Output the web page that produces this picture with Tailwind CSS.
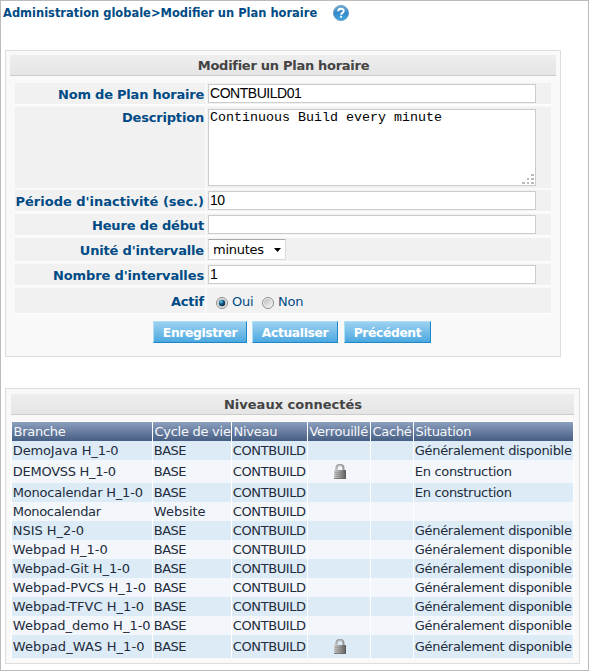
<!DOCTYPE html>
<html lang="fr">
<head>
<meta charset="utf-8">
<title>Modifier un Plan horaire</title>
<script src="https://cdn.jsdelivr.net/npm/@tailwindcss/browser@4"></script>
</head>
<body class="bg-white">
<main class="w-[589px] h-[671px] border border-[#bbb] pl-1 flex flex-col items-start overflow-hidden font-['DejaVu_Sans',sans-serif] text-[13px] whitespace-nowrap text-[#004b85]">
  <div class="h-[49px] pt-[3px] flex items-start">
    <h1 class="-ml-[2px] w-[330px] h-[18px] leading-[19px] font-bold text-[11.47px]">Administration globale&gt;Modifier un Plan horaire</h1>
    <svg class="w-4 h-4 mt-[1px]" viewBox="0 0 16 16">
      <defs><linearGradient id="help" x1="0" y1="0" x2="0" y2="1"><stop offset="0" stop-color="#76afd8"/><stop offset=".5" stop-color="#3387c7"/><stop offset="1" stop-color="#3fa9e4"/></linearGradient></defs>
      <circle cx="8" cy="8" r="7.6" fill="url(#help)" stroke="#6294bd" stroke-width=".8"/>
      <path d="M5.2 6.2C5.3 3 10.8 3 10.8 6.1C10.8 7.8 8.1 7.9 8.1 9.7" fill="none" stroke="#fff" stroke-width="1.9"/>
      <rect x="7.1" y="10.8" width="2" height="1.9" fill="#fff"/>
    </svg>
  </div>

  <section class="w-[556px] h-[307px] border border-[#ddd] bg-[#f9f9f9] p-1">
    <h2 class="h-[21px] leading-[22px] pl-px border-b border-[#ccc] bg-linear-to-b from-[#eee] to-[#e5e5e5] text-center font-bold text-[#444] tracking-[-0.28px]">Modifier un Plan horaire</h2>
    <div class="mt-[7px] ml-[5px] w-[536px] grid grid-cols-[190px_344px] gap-x-[2px] gap-y-[2px] grid-rows-[22px_81px_22px_22px_24px_22px_26px]">
      <label class="bg-[#f1f1f1] border-b border-white text-right pr-px font-bold leading-[23px] tracking-[-0.22px]">Nom de Plan horaire</label>
      <div class="bg-[#f1f1f1] border-b border-white pt-px pl-px"><div class="w-[328px] h-[19px] border border-[#ccc] bg-white pl-px leading-[17px] text-black text-[14px] tracking-[-0.47px] font-['Liberation_Sans',sans-serif]">CONTBUILD01</div></div>
      <label class="bg-[#f1f1f1] text-right pr-px font-bold leading-[22px] tracking-[-0.18px]">Description</label>
      <div class="bg-[#f1f1f1] pt-[2px] pl-px"><div class="w-[328px] h-[77px] border border-[#ccc] bg-white pl-px leading-[15px] text-black text-[13.33px] font-['Liberation_Mono',monospace] flex justify-between">
        <span>Continuous Build every minute</span>
        <svg class="w-3 h-[11px] self-end mb-px mr-px" viewBox="0 0 12 11" fill="#bbb"><path d="M9 1h3v2H9zM5 5h2v2H5zM9 5h3v2H9zM0 9h3v2H0zM5 9h2v2H5zM9 9h3v2H9z"/></svg>
      </div></div>
      <label class="bg-[#f1f1f1] border-b border-white text-right pr-px font-bold leading-[23px] tracking-normal">Période d'inactivité (sec.)</label>
      <div class="bg-[#f1f1f1] border-b border-white pt-px pl-px"><div class="w-[328px] h-[19px] border border-[#ccc] bg-white pl-px leading-[17px] text-black text-[14px] tracking-[-0.47px] font-['Liberation_Sans',sans-serif]">10</div></div>
      <label class="bg-[#f1f1f1] border-b border-white text-right pr-px font-bold leading-[24px] tracking-[-0.16px]">Heure de début</label>
      <div class="bg-[#f1f1f1] border-b border-white pt-px pl-px"><div class="w-[328px] h-[19px] border border-[#ccc] bg-white"></div></div>
      <label class="bg-[#f1f1f1] border-b border-white text-right pr-px font-bold leading-[26px] tracking-[-0.17px]">Unité d'intervalle</label>
      <div class="bg-[#f1f1f1] border-b border-white pt-px pl-px"><div class="w-[78px] h-[21px] rounded-[1px] border border-[#dadada] border-t-[#aaa] bg-white pl-1 pr-1 flex items-center justify-between text-black"><span class="pt-px tracking-[-0.25px]">minutes</span><svg class="w-[7px] h-1" viewBox="0 0 7 4"><path d="M0 0h7L3.5 4z"/></svg></div></div>
      <label class="bg-[#f1f1f1] border-b border-white text-right pr-px font-bold leading-[24px] tracking-[-0.13px]">Nombre d'intervalles</label>
      <div class="bg-[#f1f1f1] border-b border-white pt-px pl-px"><div class="w-[328px] h-[19px] border border-[#ccc] bg-white pl-px leading-[17px] text-black text-[14px] tracking-[-0.47px] font-['Liberation_Sans',sans-serif]">1</div></div>
      <span class="bg-[#f1f1f1] border-b border-white text-right pr-px font-bold leading-[27px] tracking-[-0.2px]">Actif</span>
      <div class="bg-[#f1f1f1] border-b border-white flex leading-[27px] pl-[9px] tracking-[-0.25px]">
        <svg class="w-3 h-3 mt-[9px]" viewBox="0 0 12 12"><defs><radialGradient id="dot" cx=".35" cy=".3" r=".7"><stop offset="0" stop-color="#7ccbee"/><stop offset=".5" stop-color="#155f8c"/><stop offset="1" stop-color="#0a2d47"/></radialGradient></defs><circle cx="6" cy="6" r="5.5" fill="#f4f4f4" stroke="#8a8a8a"/><circle cx="6" cy="6" r="4.2" fill="#ddd" stroke="#c4c4c4" stroke-width=".6"/><circle cx="6" cy="6" r="3.2" fill="url(#dot)"/></svg>
        <span class="w-[34px] pl-1">Oui</span>
        <svg class="w-3 h-3 mt-[9px]" viewBox="0 0 12 12"><defs><linearGradient id="off" x1="0" y1="0" x2="1" y2="1"><stop offset="0" stop-color="#bbb"/><stop offset="1" stop-color="#f6f6f6"/></linearGradient></defs><circle cx="6" cy="6" r="5.5" fill="#f4f4f4" stroke="#8a8a8a"/><circle cx="6" cy="6" r="4" fill="url(#off)"/></svg>
        <span class="pl-1">Non</span>
      </div>
    </div>
    <div class="flex h-[22px] mt-[7px] ml-[143px] text-center font-bold text-white text-[12.3px] leading-[22px] tracking-[-0.36px]">
      <div class="w-[94px] mr-[5px] border border-t-[#aee0f5] border-l-[#aee0f5] border-r-[#1f86c6] border-b-[#1f86c6] bg-linear-to-b from-[#9bd1f0] to-[#4ba9e0]">Enregistrer</div>
      <div class="w-[86px] mr-[6px] border border-t-[#aee0f5] border-l-[#aee0f5] border-r-[#1f86c6] border-b-[#1f86c6] bg-linear-to-b from-[#9bd1f0] to-[#4ba9e0]">Actualiser</div>
      <div class="w-[87px] border border-t-[#aee0f5] border-l-[#aee0f5] border-r-[#1f86c6] border-b-[#1f86c6] bg-linear-to-b from-[#9bd1f0] to-[#4ba9e0]">Précédent</div>
    </div>
  </section>

  <section class="mt-[31px] w-[575px] h-[276px] border border-[#ddd] bg-[#f9f9f9] p-[5px]">
    <h2 class="h-[21px] leading-[22px] pl-px border-b border-[#ccc] bg-linear-to-b from-[#eee] to-[#e5e5e5] text-center font-bold text-[#444]">Niveaux connectés</h2>
    <div id="levels" class="mt-[6px] w-[563px] bg-white p-px flex flex-col gap-px text-[#222c3c]">
      <div class="h-[18px] leading-[19px] grid grid-cols-[140px_78px_75px_62px_42px_159px] gap-px text-[#f5f7fa] tracking-[-0.27px]">
        <div class="pl-[1.5px] bg-linear-to-b from-[#8c9fbe] to-[#475e84]">Branche</div>
        <div class="pl-[1.5px] bg-linear-to-b from-[#8c9fbe] to-[#475e84]">Cycle de vie</div>
        <div class="pl-[1.5px] bg-linear-to-b from-[#8c9fbe] to-[#475e84]">Niveau</div>
        <div class="pl-[1.5px] bg-linear-to-b from-[#8c9fbe] to-[#475e84]">Verrouillé</div>
        <div class="pl-[1.5px] bg-linear-to-b from-[#8c9fbe] to-[#475e84]">Caché</div>
        <div class="pl-[1.5px] bg-linear-to-b from-[#8c9fbe] to-[#475e84]">Situation</div>
      </div>
    </div>
  </section>
</main>
<script>
const G = 'Généralement disponible', E = 'En construction';
const rows = [
  ['DemoJava H_1-0', 'BASE', 0, G, 'tracking-[-0.15px]'],
  ['DEMOVSS H_1-0', 'BASE', 1, E, 'tracking-[-0.27px]'],
  ['Monocalendar H_1-0', 'BASE', 0, E, 'tracking-[-0.2px]'],
  ['Monocalendar', 'Website', 0, '', 'tracking-[-0.33px]'],
  ['NSIS H_2-0', 'BASE', 0, G, 'tracking-[-0.05px]'],
  ['Webpad H_1-0', 'BASE', 0, G, 'tracking-[0.05px]'],
  ['Webpad-Git H_1-0', 'BASE', 0, G, 'tracking-[-0.08px]'],
  ['Webpad-PVCS H_1-0', 'BASE', 0, G, 'tracking-normal'],
  ['Webpad-TFVC H_1-0', 'BASE', 0, G, 'tracking-normal'],
  ['Webpad_demo H_1-0', 'BASE', 0, G, 'tracking-normal'],
  ['Webpad_WAS H_1-0', 'BASE', 1, G, 'tracking-[0.1px]']
];
const lock = `<svg class="w-3 h-[15px] mt-1 ml-[25px]" viewBox="0 0 12 15"><defs><linearGradient id="metal"><stop offset="0" stop-color="#ccc"/><stop offset=".5" stop-color="#999"/><stop offset="1" stop-color="#555"/></linearGradient></defs><path d="M2.5 7V4.2C2.5-.2 9.5-.2 9.5 4.2V7" fill="none" stroke="#999" stroke-width="2"/><path d="M2.5 6V4.2C2.6 1 7 .4 8.5 2.3" fill="none" stroke="#ccc" stroke-width=".8"/><rect y="6" width="12" height="9" rx=".7" fill="url(#metal)"/><path d="M1 8.5h10M1 10.5h10M1 12.5h10" stroke="#777" stroke-opacity=".5" stroke-width=".8"/><path d="M0 14.6h12" stroke="#666" stroke-width=".8"/></svg>`;
document.getElementById('levels').insertAdjacentHTML('beforeend', rows.map(([b, c, l, s, track], i) => {
  const bg = i % 2 ? 'bg-[#f3f6fb]' : 'bg-[#ddebf6]';
  const h = l ? 'h-[22px] leading-[23px]' : 'h-[18px] leading-[19px]';
  const cycle = c === 'BASE' ? 'tracking-[-0.55px]' : 'tracking-normal';
  const cells = [[b, track], [c, cycle], ['CONTBUILD', 'tracking-[-0.4px]'], [l ? lock : '', ''], ['', ''], [s, 'tracking-[-0.31px]']];
  return `<div class="${h} grid grid-cols-[140px_78px_75px_62px_42px_159px] gap-px">` +
    cells.map(([t, k]) => `<div class="${bg} pl-[0.8px] ${k}">${t}</div>`).join('') + '</div>';
}).join(''));
</script>
</body>
</html>
